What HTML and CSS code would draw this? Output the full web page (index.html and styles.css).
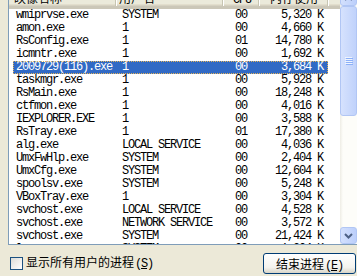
FILE: index.html
```html
<!DOCTYPE html>
<html>
	<head>
		<meta charset="UTF-8">
		<title>任务管理器 - 进程</title>
		<link rel="stylesheet" href="styles.css">
	</head>
	<body>
		<div class="listview">
			<div class="lv-main">
				<div class="lv-header">
					<div class="hd name">映像名称</div>
					<div class="hd user">用户名</div>
					<div class="hd cpu"><span class="asc">CPU</span></div>
					<div class="hd mem">内存使用</div>
					<div class="hd rest"></div>
				</div>
				<div class="lv-rows">
					<div class="row"><span class="c-name">wmiprvse.exe</span><span class="c-user">SYSTEM</span><span class="c-cpu">00</span><span class="c-mem">5,320 K</span></div>
					<div class="row"><span class="c-name">amon.exe</span><span class="c-user">1</span><span class="c-cpu">00</span><span class="c-mem">4,660 K</span></div>
					<div class="row"><span class="c-name">RsConfig.exe</span><span class="c-user">1</span><span class="c-cpu">01</span><span class="c-mem">14,780 K</span></div>
					<div class="row"><span class="c-name">icmntr.exe</span><span class="c-user">1</span><span class="c-cpu">00</span><span class="c-mem">1,692 K</span></div>
					<div class="row selected"><span class="c-name">2009729(116).exe</span><span class="c-user">1</span><span class="c-cpu">00</span><span class="c-mem">3,684 K</span></div>
					<div class="row"><span class="c-name">taskmgr.exe</span><span class="c-user">1</span><span class="c-cpu">00</span><span class="c-mem">5,928 K</span></div>
					<div class="row"><span class="c-name">RsMain.exe</span><span class="c-user">1</span><span class="c-cpu">00</span><span class="c-mem">18,248 K</span></div>
					<div class="row"><span class="c-name">ctfmon.exe</span><span class="c-user">1</span><span class="c-cpu">00</span><span class="c-mem">4,016 K</span></div>
					<div class="row"><span class="c-name">IEXPLORER.EXE</span><span class="c-user">1</span><span class="c-cpu">00</span><span class="c-mem">3,588 K</span></div>
					<div class="row"><span class="c-name">RsTray.exe</span><span class="c-user">1</span><span class="c-cpu">01</span><span class="c-mem">17,380 K</span></div>
					<div class="row"><span class="c-name">alg.exe</span><span class="c-user">LOCAL SERVICE</span><span class="c-cpu">00</span><span class="c-mem">4,036 K</span></div>
					<div class="row"><span class="c-name">UmxFwHlp.exe</span><span class="c-user">SYSTEM</span><span class="c-cpu">00</span><span class="c-mem">2,404 K</span></div>
					<div class="row"><span class="c-name">UmxCfg.exe</span><span class="c-user">SYSTEM</span><span class="c-cpu">00</span><span class="c-mem">12,604 K</span></div>
					<div class="row"><span class="c-name">spoolsv.exe</span><span class="c-user">SYSTEM</span><span class="c-cpu">00</span><span class="c-mem">5,248 K</span></div>
					<div class="row"><span class="c-name">VBoxTray.exe</span><span class="c-user">1</span><span class="c-cpu">00</span><span class="c-mem">3,304 K</span></div>
					<div class="row"><span class="c-name">svchost.exe</span><span class="c-user">LOCAL SERVICE</span><span class="c-cpu">00</span><span class="c-mem">4,528 K</span></div>
					<div class="row"><span class="c-name">svchost.exe</span><span class="c-user">NETWORK SERVICE</span><span class="c-cpu">00</span><span class="c-mem">3,572 K</span></div>
					<div class="row"><span class="c-name">svchost.exe</span><span class="c-user">SYSTEM</span><span class="c-cpu">00</span><span class="c-mem">21,424 K</span></div>
					<div class="row"><span class="c-name">lsass.exe</span><span class="c-user">SYSTEM</span><span class="c-cpu">00</span><span class="c-mem">1,304 K</span></div>
				</div>
			</div>
			<!-- 竖向滚动条 -->
			<div class="scrollbar">
				<div class="sb-btn">
					<svg width="9" height="6" viewBox="0 0 9 6"><path d="M1 5 L4.5 1.5 L8 5" fill="none" stroke="#4d6185" stroke-width="2"/></svg>
				</div>
				<div class="sb-thumb">
					<svg width="8" height="8" viewBox="0 0 8 8">
						<rect x="0" y="0" width="7" height="1" fill="#eef4fe"/><rect x="1" y="1" width="7" height="1" fill="#8cb0f8"/>
						<rect x="0" y="2" width="7" height="1" fill="#eef4fe"/><rect x="1" y="3" width="7" height="1" fill="#8cb0f8"/>
						<rect x="0" y="4" width="7" height="1" fill="#eef4fe"/><rect x="1" y="5" width="7" height="1" fill="#8cb0f8"/>
						<rect x="0" y="6" width="7" height="1" fill="#eef4fe"/><rect x="1" y="7" width="7" height="1" fill="#8cb0f8"/>
					</svg>
				</div>
				<div class="sb-track"></div>
				<div class="sb-btn">
					<svg width="9" height="6" viewBox="0 0 9 6"><path d="M1 1 L4.5 4.5 L8 1" fill="none" stroke="#4d6185" stroke-width="2"/></svg>
				</div>
			</div>
		</div>

		<div class="footer">
			<label class="check">
				<span class="box"></span>
				<span class="label">显示所有用户的进程<span class="acc">(<u>S</u>)</span></span>
			</label>
			<button class="btn">结束进程<span class="acc">(<u>E</u>)</span></button>
		</div>
	</body>
</html>
```

FILE: styles.css
```css
*{
	margin: 0;
	padding: 0;
	box-sizing: border-box;
}
body{
	width: 357px;
	height: 276px;
	overflow: hidden;
	background-color: #ece9d8;
	font-family: "Noto Sans CJK SC", sans-serif;
	font-size: 12px;
	color: #000;
}

/* 列表框 */
.listview{
	display: flex;
	width: 350px;
	height: 257px;
	margin: -12px 0 0 8px;
	border: 1px solid #7f9db9;
	background-color: #fff;
}
.lv-main{
	flex: 1;
	overflow: hidden;
}

/* 表头 */
.lv-header{
	display: flex;
	height: 20px;
	background-color: #ebeadb;
	border-bottom: 3px solid #cbc7b8;
	box-shadow: inset 0 -1px #d6d2c2, inset 0 -2px #e2decd;
}
.lv-header .hd{
	line-height: 17px;
	border-right: 1px solid #c7c5b2;
	box-shadow: 1px 0 #fff;
	white-space: nowrap;
}
.hd.name{ width: 107px; padding-left: 5px; }
.hd.user{ width: 107px; padding-left: 3px; }
.hd.cpu{ width: 36px; padding-left: 10px; }
.hd.mem{ width: 69px; text-align: right; padding-right: 9px; }
.hd.rest{ flex: 1; border-right: none; box-shadow: none; }

.asc{
	font-family: "Liberation Mono", monospace;
	letter-spacing: -1.2px;
}

/* 行 */
.lv-rows{
	padding-left: 4px;
}
.row{
	display: flex;
	width: 315px;
	height: 13px;
	line-height: 13px;
	font-family: "Liberation Mono", monospace;
	font-size: 12px;
	letter-spacing: -1.2px;
	white-space: nowrap;
}
.row span{
	overflow: hidden;
}
.c-name{ width: 103px; padding-left: 3px; }
.c-user{ width: 107px; padding-left: 6px; }
.c-cpu{ width: 36px; padding-left: 12px; }
.c-mem{ width: 69px; text-align: right; padding-right: 5px; }

.row.selected{
	background-color: #316ac5;
	color: #fff;
	outline: 1px dotted #e3b35a;
	outline-offset: -1px;
}

/* 滚动条 */
.scrollbar{
	width: 17px;
	display: flex;
	flex-direction: column;
	background: linear-gradient(to right, #eeede5, #fdfdf9 3px);
}
.sb-btn{
	height: 17px;
	display: flex;
	align-items: center;
	justify-content: center;
	background: linear-gradient(to right, #d3e0fd, #bccffb);
	border: 1px solid #b1c6f4;
	border-radius: 3px;
}
.sb-thumb{
	height: 110px;
	display: flex;
	align-items: center;
	justify-content: center;
	background: linear-gradient(to right, #d6e2fd, #c0d2fb);
	border: 1px solid #b1c6f4;
	border-radius: 3px;
}
.sb-track{
	flex: 1;
}

/* 底部 */
.footer{
	display: flex;
	justify-content: space-between;
	align-items: flex-start;
	padding: 8px 1px 0 10px;
}
.check{
	display: flex;
	align-items: center;
	margin-top: 2px;
}
.box{
	width: 13px;
	height: 13px;
	border: 1px solid #1c5180;
	background: linear-gradient(135deg, #dcdcd7, #fff);
	margin-right: 3px;
}
.label{
	line-height: 13px;
}
.acc{
	font-family: "Liberation Mono", monospace;
	letter-spacing: -1.2px;
	margin-left: 1px;
}
.btn{
	width: 93px;
	height: 21px;
	font-family: "Noto Sans CJK SC", sans-serif;
	font-size: 12px;
	color: #000;
	border: 1px solid #003c74;
	border-radius: 3px;
	background: linear-gradient(to bottom, #fff, #f4f3ee 70%, #d8d5c8);
}
```
